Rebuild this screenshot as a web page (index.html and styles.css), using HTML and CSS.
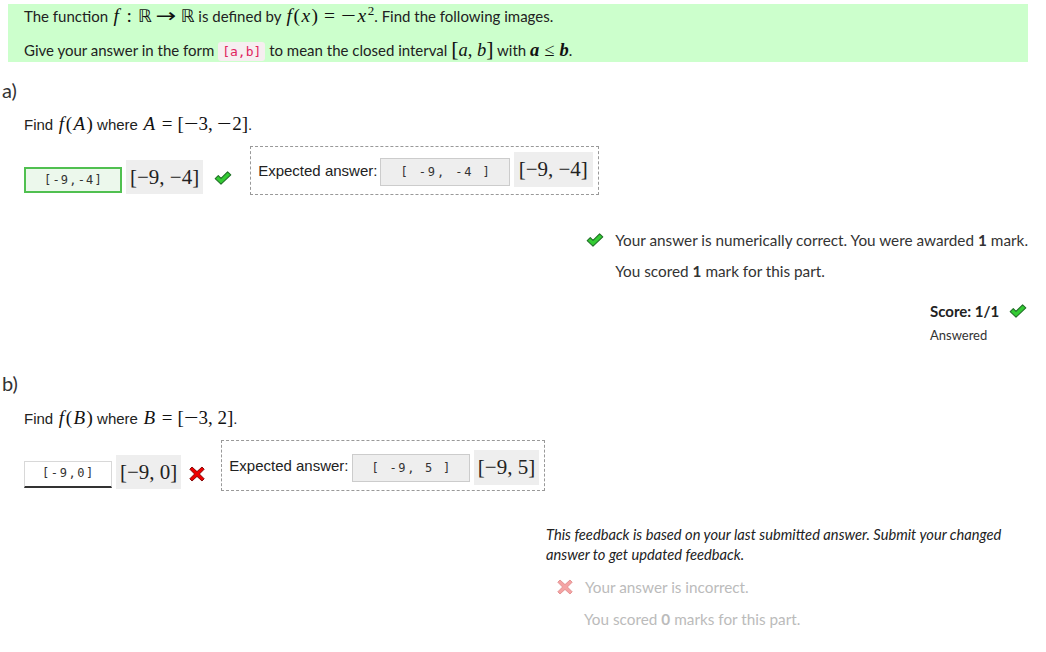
FILE: index.html
```html
<!DOCTYPE html>
<html>
<head>
<meta charset="utf-8">
<link rel="stylesheet" href="styles.css">
</head>
<body>
<div class="question">
  <div class="statement">
    <p>The function <span class="m km"><i>f</i><span class="op sop">:</span><span class="bb">ℝ</span><span class="op arrow">→</span><span class="bb">ℝ</span></span> is defined by <span class="m km"><i>f</i>(<i>x</i>)<span class="op sop">=</span><span class="minus">−</span><i>x</i><sup>2</sup></span>. Find the following images.</p>
    <p>Give your answer in the form <code class="code">[a,b]</code> to mean the closed interval <span class="m"><span class="big">[</span><i>a</i>, <i>b</i><span class="big">]</span></span> with <span class="m"><i class="bi">a</i><span class="op">≤</span><i class="bi">b</i></span>.</p>
  </div>

  <section class="part">
    <h3 class="part-label">a)</h3>
    <p class="prompt">Find <span class="m km"><i>f</i>(<i>A</i>)</span> where <span class="m km"><i>A</i><span class="op">=</span>[<span class="minus">−</span>3, <span class="minus">−</span>2]</span>.</p>
    <div class="answer-row">
      <span class="input correct">[-9,-4]</span>
      <span class="preview">[−9, −4]</span>
      <svg class="icon-check" width="18" height="14" viewBox="0 0 18 14"><path d="M1.2 7.6 L4.3 4.6 L7 7.3 L13.6 0.8 L16.8 3.9 L7 13.2 Z" fill="#33cc33" stroke="#23702a" stroke-width="1.1" stroke-linejoin="round"/></svg>
      <div class="expected">
        <span class="exp-label">Expected answer:</span>
        <span class="exp-input">[ -9, -4 ]</span>
        <span class="preview exp-prev">[−9, −4]</span>
      </div>
    </div>
    <div class="feedback-wrap">
      <div class="feedback">
        <p class="fb-line"><svg class="fb-icon" width="18" height="14" viewBox="0 0 18 14"><path d="M1.2 7.6 L4.3 4.6 L7 7.3 L13.6 0.8 L16.8 3.9 L7 13.2 Z" fill="#33cc33" stroke="#23702a" stroke-width="1.1" stroke-linejoin="round"/></svg>Your answer is numerically correct. You were awarded <b>1</b> mark.</p>
        <p class="fb-line indent">You scored <b>1</b> mark for this part.</p>
      </div>
    </div>
    <div class="score-wrap">
      <div class="score">
        <p class="score-line"><b>Score: 1/1</b><svg class="score-icon" width="18" height="14" viewBox="0 0 18 14"><path d="M1.2 7.6 L4.3 4.6 L7 7.3 L13.6 0.8 L16.8 3.9 L7 13.2 Z" fill="#33cc33" stroke="#23702a" stroke-width="1.1" stroke-linejoin="round"/></svg></p>
        <p class="answered">Answered</p>
      </div>
    </div>
  </section>

  <section class="part part-b">
    <h3 class="part-label">b)</h3>
    <p class="prompt">Find <span class="m km"><i>f</i>(<i>B</i>)</span> where <span class="m km"><i>B</i><span class="op">=</span>[<span class="minus">−</span>3, 2]</span>.</p>
    <div class="answer-row">
      <span class="input wrong">[-9,0]</span>
      <span class="preview">[−9, 0]</span>
      <svg class="icon-cross" width="16" height="16" viewBox="0 0 16 16"><path d="M3 1 L8 5.6 L13 1 L15.2 3.2 L10.4 8 L15.2 12.8 L13 15 L8 10.4 L3 15 L0.8 12.8 L5.6 8 L0.8 3.2 Z" fill="#ee0000" stroke="#7a0000" stroke-width="0.9" stroke-linejoin="round"/></svg>
      <div class="expected">
        <span class="exp-label">Expected answer:</span>
        <span class="exp-input">[ -9, 5 ]</span>
        <span class="preview exp-prev">[−9, 5]</span>
      </div>
    </div>
    <div class="feedback-wrap">
      <div class="feedback wide">
        <p class="note">This feedback is based on your last submitted answer. Submit your changed answer to get updated feedback.</p>
        <div class="stale">
          <p class="fb-line"><svg class="fb-icon" width="16" height="16" viewBox="0 0 16 16"><path d="M3 1 L8 5.6 L13 1 L15.2 3.2 L10.4 8 L15.2 12.8 L13 15 L8 10.4 L3 15 L0.8 12.8 L5.6 8 L0.8 3.2 Z" fill="#f5a3a3" stroke="#e08f8f" stroke-width="0.9" stroke-linejoin="round"/></svg>Your answer is incorrect.</p>
          <p class="fb-line indent">You scored <b>0</b> marks for this part.</p>
        </div>
      </div>
    </div>
  </section>
</div>
</body>
</html>
```

FILE: styles.css
```css
html, body {
  margin: 0;
  padding: 0;
  background: #ffffff;
}

body {
  font-family: Lato, "Liberation Sans", sans-serif;
  font-size: 15px;
  color: #222;
  width: 1046px;
  height: 652px;
  overflow: hidden;
}

p { margin: 0; }

.question {
  padding-top: 4px;
}

.statement {
  margin-left: 8px;
  width: 1020px;
  box-sizing: border-box;
  background: #ccffcc;
  padding: 0 16px;
  display: flex;
  flex-direction: column;
  gap: 10px;
}

.statement p {
  line-height: 24px;
  height: 24px;
  white-space: nowrap;
}

.m {
  font-family: "Liberation Serif", "DejaVu Serif", serif;
  font-size: 18.5px;
  color: #111;
}

.m i {
  font-style: italic;
}

.km {
  font-size: 19.5px;
}

.km i {
  padding: 0 1.5px;
}

.minus {
  display: inline-block;
  transform: scaleX(1.35);
  margin: 0 2px;
}

.m .bi {
  font-weight: bold;
}

.m sup {
  font-size: 13px;
  vertical-align: 7px;
  line-height: 0;
}

.op {
  padding: 0 5px;
}

.sop {
  padding: 0 6px;
}

.arrow {
  display: inline-block;
  font-family: "DejaVu Sans", sans-serif;
  font-size: 19px;
  margin: 0 7px 0 6px;
  padding: 0;
  transform: scaleX(1.3);
  line-height: 0;
}

.bb {
  font-family: "DejaVu Sans", sans-serif;
  font-size: 17.5px;
}

.big {
  font-size: 22px;
  line-height: 0;
}

.code {
  font-family: "DejaVu Sans Mono", "Liberation Mono", monospace;
  font-size: 13px;
  color: #e0245e;
  background: #f6eef0;
  padding: 2px 4px;
  border-radius: 3px;
}

.part-label {
  margin: 14px 0 0 2px;
  font-family: Lato, sans-serif;
  font-weight: 400;
  font-size: 20px;
  line-height: 28px;
  color: #333;
}

.prompt {
  margin: 8px 0 0 24px;
  line-height: 24px;
  font-family: "Liberation Sans", Arial, sans-serif;
  font-size: 15px;
  color: #222;
}

.prompt .m {
  font-size: 19px;
}

.answer-row {
  margin: 9px 0 0 24px;
  display: flex;
  align-items: flex-start;
  height: 49px;
}

.input {
  font-family: "DejaVu Sans Mono", "Liberation Mono", monospace;
  font-size: 12px;
  letter-spacing: 1.2px;
  color: #333;
  box-sizing: border-box;
  height: 26px;
  line-height: 22px;
  padding: 0 17px 0 18px;
  margin-top: 21px;
}

.input.correct {
  border: 2px solid #50c050;
  background: #ecf8ec;
}

.input.wrong {
  border: 1px solid #d8d8d8;
  border-bottom: 2px solid #333;
  line-height: 23px;
  padding: 0 16px 0 17px;
  letter-spacing: 1.6px;
}

.preview {
  font-family: "Liberation Serif", "DejaVu Serif", serif;
  font-size: 21px;
  color: #222;
  background: #eeeeee;
  height: 34px;
  line-height: 34px;
  padding: 0 4px;
  margin: 14px 0 0 4px;
}

.icon-check {
  margin: 25px 0 0 11px;
  flex: none;
}

.icon-cross {
  margin: 26px 0 0 8px;
  flex: none;
}

.expected {
  margin-left: 18px;
  border: 1px dashed #999;
  height: 47px;
  display: flex;
  align-items: flex-start;
  padding: 0 5px 0 7px;
}

.exp-label {
  font-family: "Liberation Sans", Arial, sans-serif;
  font-size: 15px;
  line-height: 20px;
  margin-top: 14px;
  color: #222;
}

.exp-input {
  font-family: "DejaVu Sans Mono", "Liberation Mono", monospace;
  font-size: 12px;
  letter-spacing: 1.9px;
  color: #333;
  background: #eeeeee;
  border: 1px solid #cccccc;
  box-sizing: border-box;
  height: 28px;
  line-height: 26px;
  padding: 0 17px 0 19px;
  margin: 11px 0 0 3px;
}

.exp-prev {
  margin-top: 5px;
  height: 35px;
  line-height: 35px;
  padding: 0 5px;
}

.feedback-wrap {
  display: flex;
  justify-content: flex-end;
  margin-right: 18px;
  margin-top: 33px;
}

.feedback {
  display: flex;
  flex-direction: column;
  gap: 7px;
  font-size: 15.3px;
  color: #333;
}

.fb-line {
  line-height: 24px;
  display: flex;
  align-items: center;
  white-space: nowrap;
}

.fb-line b {
  margin: 0 4px;
}

.fb-icon {
  flex: none;
  margin: 0 11px 0 0;
}

.indent {
  padding-left: 29px;
}

.score-wrap {
  display: flex;
  justify-content: flex-end;
  margin: 16px 18px 0 0;
}

.score {
  width: 98px;
}

.score-line {
  line-height: 24px;
  display: flex;
  align-items: center;
  font-size: 15px;
  color: #222;
}

.score-icon {
  flex: none;
  margin: 0 0 0 10px;
}

.answered {
  margin-top: 3px;
  line-height: 18px;
  font-size: 13px;
  color: #333;
}

.part-b .part-label {
  margin-top: 25px;
}

.part-b .prompt {
  margin-top: 9px;
}

.part-b .answer-row {
  margin-top: 9px;
}

.part-b .input {
  margin-top: 21px;
  height: 27px;
}

.part-b .preview {
  margin-top: 15px;
}

.part-b .exp-prev {
  margin-top: 9px;
  padding: 0 4px;
}

.part-b .expected {
  margin-left: 16px;
  height: 49px;
}

.part-b .exp-label {
  margin-top: 15px;
}

.part-b .exp-input {
  margin-top: 13px;
  letter-spacing: 1.7px;
}

.part-b .feedback-wrap {
  margin-top: 36px;
}

.feedback.wide {
  width: 482px;
  gap: 11px;
}

.note {
  font-style: italic;
  line-height: 19.5px;
  font-size: 14.7px;
  color: #222;
  white-space: normal;
  padding-right: 20px;
}

.stale {
  padding-left: 11px;
  color: #bbbbbb;
  display: flex;
  flex-direction: column;
  gap: 8px;
}

.stale .fb-icon {
  margin: 0 12px 0 0;
}

.stale .indent {
  padding-left: 27px;
}
```
